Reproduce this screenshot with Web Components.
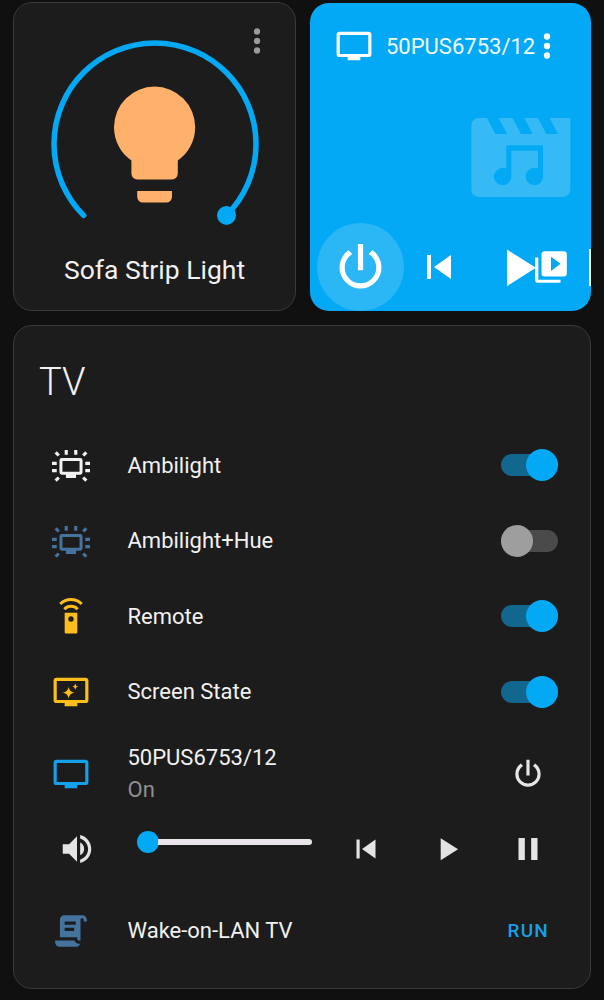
<!DOCTYPE html>
<html>
<head>
<meta charset="utf-8">
<title>TV dashboard</title>
<style>
  html, body { margin: 0; background: #101010; }
  body { font-family: Roboto, "Liberation Sans", sans-serif; color: #f1f1f1; }
  dash-board { width: 604px; height: 1000px; overflow: hidden; }
</style>
</head>
<body>
<dash-board>
  <light-card name="Sofa Strip Light"></light-card>
  <media-card name="50PUS6753/12"></media-card>
  <tv-card title="TV">
    <tv-row name="Ambilight" height="75.5">
      <mdi-icon slot="icon" name="ambient" color="#f1f1f1"></mdi-icon>
      <tv-toggle slot="end" on></tv-toggle>
    </tv-row>
    <tv-row name="Ambilight+Hue" height="75.5">
      <mdi-icon slot="icon" name="ambient" color="#44739e"></mdi-icon>
      <tv-toggle slot="end"></tv-toggle>
    </tv-row>
    <tv-row name="Remote" height="75.5">
      <mdi-icon slot="icon" name="remote" color="#fdbe1c"></mdi-icon>
      <tv-toggle slot="end" on></tv-toggle>
    </tv-row>
    <tv-row name="Screen State" height="75.5">
      <mdi-icon slot="icon" name="shimmer" color="#fdbe1c"></mdi-icon>
      <tv-toggle slot="end" on></tv-toggle>
    </tv-row>
    <tv-row name="50PUS6753/12" secondary="On" height="88.5">
      <mdi-icon slot="icon" name="television" color="#14a0ea"></mdi-icon>
      <mdi-icon slot="end" name="power" color="#e6e6e6" style="margin-right:11px"></mdi-icon>
    </tv-row>
    <player-row></player-row>
    <tv-row name="Wake-on-LAN TV" height="98">
      <mdi-icon slot="icon" name="script" color="#44739e"></mdi-icon>
      <span slot="end" class="run">RUN</span>
    </tv-row>
  </tv-card>
</dash-board>

<script>
// paths from material design icons, the few it doesn't have are drawn by hand
const ICONS = {
  bulb: '<path d="M12,2A7,7 0 0,0 5,9C5,11.38 6.19,13.47 8,14.74V17A1,1 0 0,0 9,18H15A1,1 0 0,0 16,17V14.74C17.81,13.47 19,11.38 19,9A7,7 0 0,0 12,2M9,21A1,1 0 0,0 10,22H14A1,1 0 0,0 15,21V20H9V21Z"/>',
  television: '<path d="M21,17H3V5H21M21,3H3A2,2 0 0,0 1,5V17A2,2 0 0,0 3,19H8V21H16V19H21A2,2 0 0,0 23,17V5A2,2 0 0,0 21,3Z"/>',
  dots: '<path d="M12,16A2,2 0 0,1 14,18A2,2 0 0,1 12,20A2,2 0 0,1 10,18A2,2 0 0,1 12,16M12,10A2,2 0 0,1 14,12A2,2 0 0,1 12,14A2,2 0 0,1 10,12A2,2 0 0,1 12,10M12,4A2,2 0 0,1 14,6A2,2 0 0,1 12,8A2,2 0 0,1 10,6A2,2 0 0,1 12,4Z"/>',
  power: '<path d="M16.56,5.44L15.11,6.89C16.84,7.94 18,9.83 18,12A6,6 0 0,1 12,18A6,6 0 0,1 6,12C6,9.83 7.16,7.94 8.88,6.88L7.44,5.44C5.36,6.88 4,9.28 4,12A8,8 0 0,0 12,20A8,8 0 0,0 20,12C20,9.28 18.64,6.88 16.56,5.44M13,3H11V13H13"/>',
  previous: '<path d="M6,18V6H8V18H6M9.5,12L18,6V18L9.5,12Z"/>',
  play: '<path d="M8,5.14V19.14L19,12.14L8,5.14Z"/>',
  pause: '<path d="M14,19H18V5H14M6,19H10V5H6V19Z"/>',
  volume: '<path d="M14,3.23V5.29C16.89,6.15 19,8.83 19,12C19,15.17 16.89,17.84 14,18.7V20.77C18,19.86 21,16.28 21,12C21,7.72 18,4.14 14,3.23M16.5,12C16.5,10.23 15.5,8.71 14,7.97V16C15.5,15.29 16.5,13.76 16.5,12M3,9V15H7L12,20V4L7,9H3Z"/>',
  playbox: '<path d="M4,6H2V20A2,2 0 0,0 4,22H18V20H4M20,2H8A2,2 0 0,0 6,4V16A2,2 0 0,0 8,18H20A2,2 0 0,0 22,16V4A2,2 0 0,0 20,2M12,14.5V5.5L18,10L12,14.5Z"/>',
  script: '<path d="M17.8,20C17.4,21.2 16.3,22 15,22H5C3.3,22 2,20.7 2,19V18H5L14.2,18C14.6,19.2 15.7,20 17,20H17.8M19,2C20.7,2 22,3.3 22,5V6H20V5C20,4.4 19.6,4 19,4C18.4,4 18,4.4 18,5V18H17C16.4,18 16,17.6 16,17V16H5V5C5,3.3 6.3,2 8,2H19M8,6V8H15V6H8M8,10V12H14V10H8Z"/>',
  ambient: `<path fill-rule="evenodd" d="M6.2,7.6H17.8A1.5,1.5 0 0,1 19.3,9.1V16.6A1.5,1.5 0 0,1 17.8,18.1H15.2V20.2H8.8V18.1H6.2A1.5,1.5 0 0,1 4.7,16.6V9.1A1.5,1.5 0 0,1 6.2,7.6M6.6,9.5V16.2H17.4V9.5H6.6Z"/>
    <path d="M8,2.5H10V5.5H8ZM14,2.5H16V5.5H14ZM0,10H3V12H0ZM0,14.6H3V16.6H0ZM21,10H24V12H21ZM21,14.6H24V16.6H21Z"/>
    <path d="M1.6,4.7L3,3.3L5,5.3L3.6,6.7ZM22.4,4.7L21,3.3L19,5.3L20.4,6.7ZM1.6,21.2L3,22.6L5,20.6L3.6,19.2ZM22.4,21.2L21,22.6L19,20.6L20.4,19.2Z"/>`,
  remote: `<path fill-rule="evenodd" d="M8,10H16V22.2A0.8,0.8 0 0,1 15.2,23H8.8A0.8,0.8 0 0,1 8,22.2ZM12,12.2A1.7,1.7 0 1,0 12,15.6A1.7,1.7 0 1,0 12,12.2Z"/>
    <path d="M5.2,4.4C9,0.7 15,0.7 18.8,4.4M7.8,7.7C10.2,5.3 13.8,5.3 16.2,7.7" fill="none" stroke="currentColor" stroke-width="1.9"/>`,
  shimmer: `<path d="M21,17H3V5H21M21,3H3A2,2 0 0,0 1,5V17A2,2 0 0,0 3,19H8V21H16V19H21A2,2 0 0,0 23,17V5A2,2 0 0,0 21,3Z"/>
    <path d="M10.5,8.7Q10.9,12 14.2,12.4Q10.9,12.8 10.5,16.1Q10.1,12.8 6.8,12.4Q10.1,12 10.5,8.7ZM14.7,6.7Q14.9,8.4 16.5,8.6Q14.9,8.8 14.7,10.5Q14.5,8.8 12.9,8.6Q14.5,8.4 14.7,6.7Z"/>`
};

class MdiIcon extends HTMLElement {
  connectedCallback() {
    const size = this.getAttribute("size") || 38;
    this.attachShadow({ mode: "open" }).innerHTML = `
      <style>
        :host { display: inline-flex; flex: none; width: ${size}px; height: ${size}px; color: ${this.getAttribute("color") || "inherit"}; }
        svg { display: block; width: 100%; height: 100%; fill: currentColor; }
      </style>
      <svg viewBox="0 0 24 24">${ICONS[this.getAttribute("name")]}</svg>
    `;
  }
}

class DashBoard extends HTMLElement {
  connectedCallback() {
    this.attachShadow({ mode: "open" }).innerHTML = `
      <style>
        :host { display: grid; grid-template-columns: 283px 281px; grid-template-rows: 309px auto; gap: 14px; box-sizing: border-box; padding: 2px 12px 0 13px; }
        ::slotted(tv-card) { grid-column: 1 / 3; }
      </style>
      <slot></slot>
    `;
  }
}

class LightCard extends HTMLElement {
  connectedCallback() {
    this.attachShadow({ mode: "open" }).innerHTML = `
      <style>
        :host { display: flex; flex-direction: column; align-items: center; position: relative; box-sizing: border-box; background: #1c1c1c; border: 1px solid #3a3a3a; border-radius: 19px; }
        svg { display: block; margin: 33px 0 0 0; fill: #ffb06b; }
        .name { margin: 18px 0 0 0; font-size: 26.5px; line-height: 32px; color: #f1f1f1; }
        .menu { position: absolute; top: 19px; right: 19px; }
      </style>
      <svg width="216" height="200" viewBox="0 0 216 200">
        <path d="M36.6,179.4A101,101 0 1 1 179.4,179.4" fill="none" stroke="#03a9f4" stroke-width="5.5" stroke-linecap="round"/>
        <circle cx="179.5" cy="179.4" r="9.5" fill="#03a9f4"/>
        <g transform="translate(38 39) scale(5.8)">${ICONS.bulb}</g>
      </svg>
      <div class="name">${this.getAttribute("name")}</div>
      <mdi-icon class="menu" name="dots" color="#9b9b9b"></mdi-icon>
    `;
  }
}

class MediaCard extends HTMLElement {
  connectedCallback() {
    this.attachShadow({ mode: "open" }).innerHTML = `
      <style>
        :host { display: flex; flex-direction: column; justify-content: space-between; position: relative; overflow: hidden; box-sizing: border-box; margin-top: 1px; background: #03a9f4; border-radius: 19px; color: #fff; }
        .head { display: flex; align-items: center; padding: 24px 0 0 25px; }
        .name { margin: 0 -7px 0 13px; font-size: 22px; color: #f2fbff; white-space: nowrap; }
        .art { position: absolute; top: 105px; right: 11px; fill: rgba(255,255,255,.2); }
        .controls { display: flex; align-items: center; height: 88px; padding-left: 7px; }
        .circle { display: flex; align-items: center; justify-content: center; width: 88px; height: 88px; border-radius: 50%; background: rgba(255,255,255,.16); }
        .prev { margin-left: 11px; }
        .play { margin-left: 23px; }
        .box { margin-left: -17px; }
        .next { flex: none; width: 2px; height: 37px; margin-left: 19px; background: #fff; }
      </style>
      <div class="head">
        <mdi-icon name="television"></mdi-icon>
        <span class="name">${this.getAttribute("name")}</span>
        <mdi-icon name="dots"></mdi-icon>
      </div>
      <svg class="art" width="118" height="98" viewBox="0 0 354 294">
        <path fill-rule="evenodd" d="M50,30H325V245A22,22 0 0,1 303,267H50A22,22 0 0,1 28,245V52A22,22 0 0,1 50,30ZM75,30H110L135,78H100ZM152,30H187L212,78H177ZM228,30H263L288,78H253ZM243,112H133V182A26,26 0 1,0 148,205V128H228V182A26,26 0 1,0 243,205Z"/>
      </svg>
      <div class="controls">
        <div class="circle"><mdi-icon name="power" size="63"></mdi-icon></div>
        <mdi-icon class="prev" name="previous" size="48"></mdi-icon>
        <mdi-icon class="play" name="play" size="63"></mdi-icon>
        <mdi-icon class="box" name="playbox"></mdi-icon>
        <span class="next"></span>
      </div>
    `;
  }
}

class TvCard extends HTMLElement {
  connectedCallback() {
    this.attachShadow({ mode: "open" }).innerHTML = `
      <style>
        :host { display: block; box-sizing: border-box; height: 664px; background: #1c1c1c; border: 1px solid #3a3a3a; border-radius: 19px; }
        .title { box-sizing: border-box; height: 101.5px; padding: 33px 0 0 25px; font-size: 38px; font-weight: 300; line-height: 46px; color: #f1f1f1; }
      </style>
      <div class="title">${this.getAttribute("title")}</div>
      <slot></slot>
    `;
  }
}

class TvRow extends HTMLElement {
  connectedCallback() {
    const second = this.getAttribute("secondary");
    this.attachShadow({ mode: "open" }).innerHTML = `
      <style>
        :host { display: flex; align-items: center; height: ${this.getAttribute("height")}px; padding: 0 32px 0 38px; }
        .text { flex: 1; margin-left: 37.5px; padding-top: 1px; font-size: 22px; line-height: 32px; color: #f1f1f1; }
        .second { color: #8f8f8f; }
        ::slotted(.run) { margin-right: 9px; font-size: 19px; font-weight: 500; letter-spacing: 1.2px; color: #1a9fe6; }
      </style>
      <slot name="icon"></slot>
      <div class="text">
        <div>${this.getAttribute("name")}</div>
        ${second ? `<div class="second">${second}</div>` : ""}
      </div>
      <slot name="end"></slot>
    `;
  }
}

class TvToggle extends HTMLElement {
  connectedCallback() {
    this.attachShadow({ mode: "open" }).innerHTML = `
      <style>
        :host { display: flex; align-items: center; justify-content: flex-start; position: relative; width: 57px; height: 22px; border-radius: 11px; background: #4a4a4a; }
        :host([on]) { justify-content: flex-end; background: #12678f; }
        .knob { width: 32px; height: 32px; flex: none; border-radius: 50%; background: #9e9e9e; }
        :host([on]) .knob { background: #03a9f4; }
      </style>
      <div class="knob"></div>
    `;
  }
}

class PlayerRow extends HTMLElement {
  connectedCallback() {
    this.attachShadow({ mode: "open" }).innerHTML = `
      <style>
        :host { display: flex; align-items: center; box-sizing: border-box; height: 63.5px; padding: 0 0 2px 44px; color: #e4e4e4; }
        .slider { display: flex; align-items: center; width: 175px; height: 22px; margin: -14px 0 0 41px; }
        .thumb { flex: none; width: 22px; height: 22px; border-radius: 50%; background: #03a9f4; }
        .track { flex: 1; height: 6px; margin-left: -1px; border-radius: 0 3px 3px 0; background: #e8e4ea; }
        .prev { margin-left: 35px; }
        .play { margin-left: 43px; }
        .pause { margin-left: 43px; }
      </style>
      <mdi-icon name="volume"></mdi-icon>
      <div class="slider"><span class="thumb"></span><span class="track"></span></div>
      <mdi-icon class="prev" name="previous"></mdi-icon>
      <mdi-icon class="play" name="play"></mdi-icon>
      <mdi-icon class="pause" name="pause"></mdi-icon>
    `;
  }
}

customElements.define("mdi-icon", MdiIcon);
customElements.define("dash-board", DashBoard);
customElements.define("light-card", LightCard);
customElements.define("media-card", MediaCard);
customElements.define("tv-card", TvCard);
customElements.define("tv-row", TvRow);
customElements.define("tv-toggle", TvToggle);
customElements.define("player-row", PlayerRow);
</script>
</body>
</html>
